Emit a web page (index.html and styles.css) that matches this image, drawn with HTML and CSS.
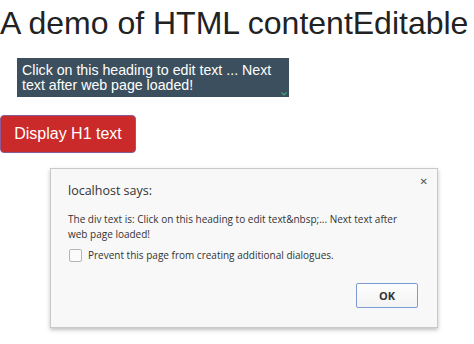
FILE: index.html
```html
<!DOCTYPE html>
<html>
<head>
<meta charset="utf-8">
<link rel="stylesheet" href="styles.css">
</head>
<body>
<h1 class="title">A demo of HTML contentEditable</h1>
<div class="editable">Click on this heading to edit text ... Next text after web page loaded!<span class="grip"><svg width="6" height="4" viewBox="0 0 6 4"><path d="M0.5 0.5 L3 3 L5.5 0.5" fill="none" stroke="#3fa77a" stroke-width="1.2"/></svg></span></div>
<button class="show-btn">Display H1 text</button>

<div class="dialog">
  <div class="dlg-close">&#x2715;</div>
  <div class="dlg-title">localhost says:</div>
  <div class="dlg-msg">The div text is: Click on this heading to edit text&amp;nbsp;... Next text after web page loaded!</div>
  <label class="dlg-check"><span class="box"></span>Prevent this page from creating additional dialogues.</label>
  <div class="dlg-actions"><button class="ok">OK</button></div>
</div>
</body>
</html>
```

FILE: styles.css
```css
html, body {
  margin: 0;
  padding: 0;
  background: #fff;
}
body {
  position: relative;
  width: 474px;
  height: 344px;
  overflow: hidden;
  font-family: "Liberation Sans", Arial, sans-serif;
}
.title {
  margin: 6px 0 0 0;
  font-weight: normal;
  font-size: 32px;
  line-height: 34px;
  color: #222;
  white-space: nowrap;
}
.editable {
  position: relative;
  margin: 18px 0 0 17px;
  width: 262px;
  height: 32px;
  padding: 5px 5px 2px 5px;
  background: #3b4f5e;
  color: #fff;
  font-size: 14.2px;
  line-height: 15px;
}
.grip {
  position: absolute;
  right: 2px;
  bottom: 1px;
  display: flex;
}
.show-btn {
  display: block;
  margin: 18px 0 0 0;
  width: 136px;
  height: 38px;
  padding: 0;
  background: #cb2a2a;
  border: 1px solid #8c5a96;
  border-radius: 4px;
  color: #fff;
  font-family: "Liberation Sans", Arial, sans-serif;
  font-size: 16px;
}
.dialog {
  position: absolute;
  left: 50px;
  top: 168px;
  width: 388px;
  height: 160px;
  box-sizing: border-box;
  background: #f8f8f8;
  border: 1px solid #c9c9c9;
  box-shadow: 0 2px 4px rgba(0,0,0,0.25);
  font-family: "Open Sans", "Noto Sans", sans-serif;
  color: #333;
  display: flex;
  flex-direction: column;
  padding: 0 19px 0 17px;
}
.dlg-close {
  position: absolute;
  right: 9px;
  top: 7px;
  font-size: 10px;
  color: #555;
  font-family: "DejaVu Sans", sans-serif;
  font-weight: bold;
}
.dlg-title {
  margin-top: 13px;
  font-size: 12.5px;
  line-height: 18px;
  color: #333;
}
.dlg-msg {
  margin-top: 12px;
  font-size: 10px;
  line-height: 15px;
  color: #333;
}
.dlg-check {
  margin-top: 6px;
  display: flex;
  align-items: center;
  gap: 6px;
  font-size: 10px;
  line-height: 15px;
  color: #333;
}
.dlg-check .box {
  width: 11px;
  height: 11px;
  border: 1px solid #b5b5b5;
  border-radius: 2px;
  background: #fbfbfb;
  margin-left: 1px;
}
.dlg-actions {
  margin-top: auto;
  margin-bottom: 19px;
  display: flex;
  justify-content: flex-end;
}
.ok {
  width: 62px;
  height: 25px;
  background: linear-gradient(#fdfdfd, #f3f3f3);
  border: 1px solid #7d9bd1;
  border-radius: 2px;
  font-family: "Open Sans", "Noto Sans", sans-serif;
  font-weight: bold;
  font-size: 11px;
  color: #333;
}
```
